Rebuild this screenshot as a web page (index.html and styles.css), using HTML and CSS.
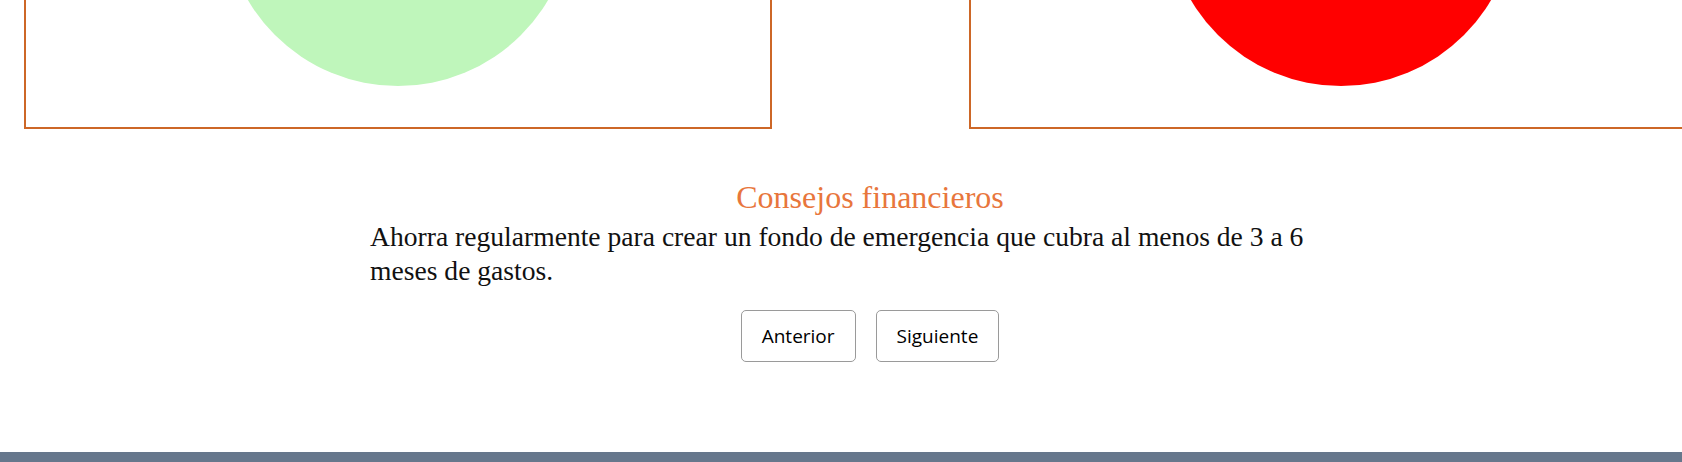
FILE: index.html
```html
<!DOCTYPE html>
<html lang="es">
<head>
<meta charset="utf-8">
<title>Consejos financieros</title>
<link rel="stylesheet" href="styles.css">
</head>
<body>
<div class="page">
  <div class="charts">
    <div class="chart-box">
      <svg class="chart" width="744" height="127" viewBox="0 0 744 127">
        <circle cx="372" cy="-88" r="174" fill="#bff6bb"/>
      </svg>
    </div>
    <div class="chart-box">
      <svg class="chart" width="744" height="127" viewBox="0 0 744 127">
        <circle cx="370" cy="-88" r="174" fill="#ff0000"/>
      </svg>
    </div>
  </div>
  <section class="tips">
    <h2 class="tips-title">Consejos financieros</h2>
    <p class="tips-text">Ahorra regularmente para crear un fondo de emergencia que cubra al menos de 3 a 6 meses de gastos.</p>
    <div class="tips-nav">
      <button class="nav-btn" type="button">Anterior</button>
      <button class="nav-btn" type="button">Siguiente</button>
    </div>
  </section>
  <footer class="footer"></footer>
</div>
</body>
</html>
```
FILE: styles.css
```css
html, body {
  overflow-x: hidden;
}
body {
  margin: 0;
  background: #ffffff;
  font-family: "Liberation Serif", "Times New Roman", serif;
}
.page {
  width: 1740px;
}
.charts {
  display: flex;
  gap: 197px;
  padding: 0 23px 0 24px;
}
.chart-box {
  width: 744px;
  height: 127px;
  flex: none;
  border: 2px solid #cd6727;
  border-top: none;
  overflow: hidden;
}
.chart {
  display: block;
}
.tips {
  display: flex;
  flex-direction: column;
  align-items: center;
}
.tips-title {
  margin: 50px 0 0;
  font-size: 32px;
  line-height: 36px;
  font-weight: normal;
  color: #e8763c;
}
.tips-text {
  width: 1000px;
  margin: 5px 0 0;
  font-size: 27.6px;
  line-height: 33.5px;
  color: #111111;
}
.tips-nav {
  display: flex;
  gap: 20px;
  margin-top: 23px;
}
.nav-btn {
  font-family: "Open Sans", "Noto Sans", sans-serif;
  font-size: 19px;
  line-height: 26px;
  padding: 12px 20px;
  color: #000000;
  background: #ffffff;
  border: 1px solid #9a9a9a;
  border-radius: 5px;
}
.footer {
  margin-top: 90px;
  height: 60px;
  background: #66778c;
}
```
